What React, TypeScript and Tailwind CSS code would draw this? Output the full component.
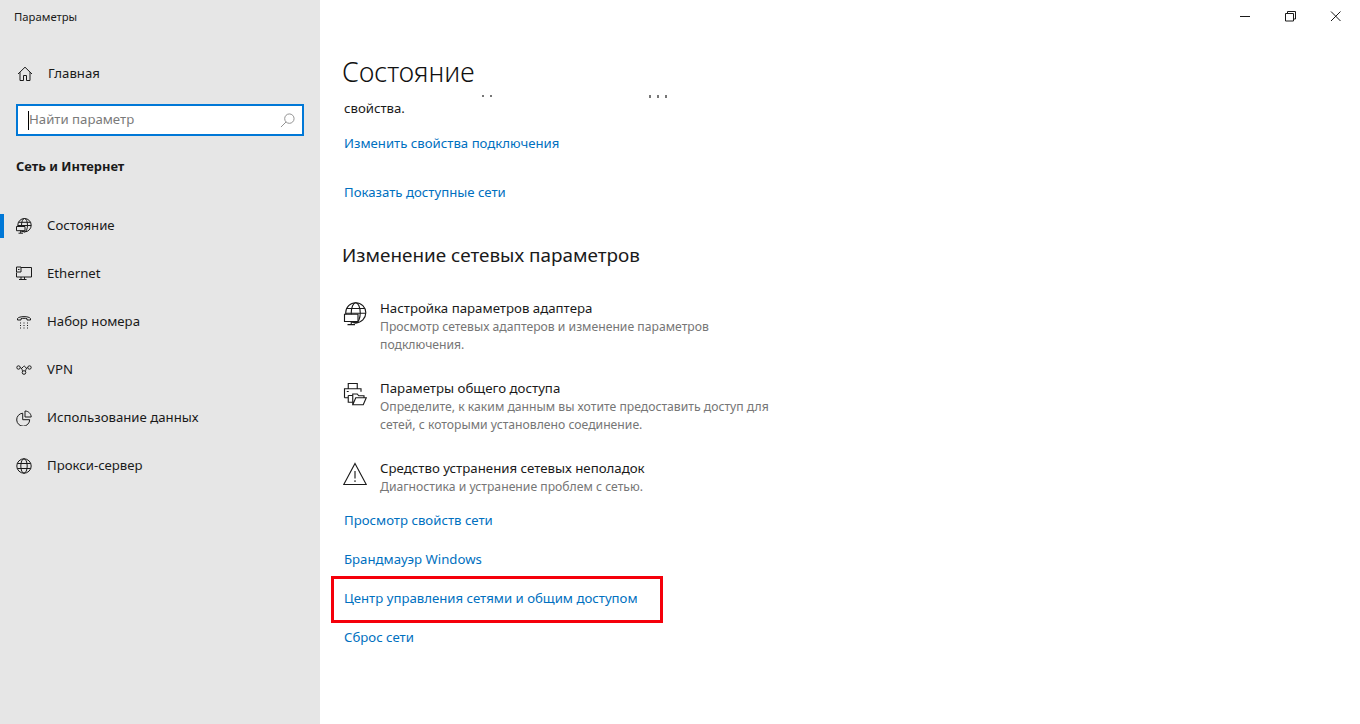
import React from "react";

const font = "font-['Noto_Sans','Open_Sans',sans-serif]";

function Icon({ children, size = 16 }: { children: React.ReactNode; size?: number }) {
  return (
    <svg
      width={size}
      height={size}
      viewBox="0 0 16 16"
      fill="none"
      stroke="#1a1a1a"
      strokeWidth={size > 16 ? 0.75 : 1}
      className="shrink-0"
    >
      {children}
    </svg>
  );
}

const HomeIcon = () => (
  <Icon>
    <path d="M1 8 8 1.200 15 8M3 6.200V14.500H6.500V9.500H9.500V14.500H13V6.200" />
  </Icon>
);

const StatusIcon = () => (
  <Icon>
    <circle cx="8.500" cy="7.200" r="6.700" />
    <ellipse cx="8.500" cy="7.200" rx="3" ry="6.700" />
    <path d="M2.400 4.300H14.600M1.800 7.500H15.200" />
    <path d="M.5 8.500H9V12.700H.5ZM4.700 12.700V15M2.500 15.200H7" fill="#e6e6e6" />
  </Icon>
);

const EthernetIcon = () => (
  <Icon>
    <path d="M5 1.500H15.500V11H.5V6.500M5 11V13.500M8.500 11V13.500M3 13.500H10.500" />
    <path d="M.5 1H5V6H.5ZM2 3.500H3.500" />
  </Icon>
);

const DialIcon = () => (
  <Icon>
    <path d="M1.500 6V4.500C3 2 13 2 14.500 4.500V6H11V4.700C9.500 4.200 6.500 4.200 5 4.700V6Z" />
    <path d="M4 9H5M7.500 9H8.500M11 9H12M4 11.500H5M7.500 11.500H8.500M11 11.500H12M4 14H5M7.500 14H8.500M11 14H12" />
  </Icon>
);

const VpnIcon = () => (
  <Icon>
    <circle cx="2.500" cy="5.500" r="1.700" />
    <circle cx="13.500" cy="5.500" r="1.700" />
    <circle cx="8" cy="10.500" r="1.800" />
    <path d="M4.200 5.500C6 5.500 6.500 9 6.500 9.500M11.800 5.500C10 5.500 9.500 9 9.500 9.500M5.500 6.500 7.500 4.500C8 4 8.500 4 9 4.500L10.500 6.500" />
  </Icon>
);

const DataIcon = () => (
  <Icon>
    <path d="M6.500 3A6.500 6.500 0 1 0 13.500 9.500H6.500Z" transform="translate(.2 .2)" />
    <path d="M9 1C12.300 1 15.200 3.700 15.200 7H9Z" />
  </Icon>
);

const GlobeIcon = () => (
  <Icon>
    <circle cx="8" cy="8" r="7.200" />
    <ellipse cx="8" cy="8" rx="3.200" ry="7.200" />
    <path d="M1.300 5.500H14.700M1.300 10.500H14.700" />
  </Icon>
);

const AdapterIcon = () => (
  <Icon size={24}>
    <circle cx="8.500" cy="7.200" r="6.700" />
    <ellipse cx="8.500" cy="7.200" rx="3" ry="6.700" />
    <path d="M2.400 4.300H14.600M1.800 7.500H15.200" />
    <path d="M1 8.200H10V13H1ZM5.500 13V15M3 15.100H8" fill="#fff" />
  </Icon>
);

const ShareIcon = () => (
  <Icon size={24}>
    <path d="M3.500 4.500V1H9.500V4.500M1 10.500V4.500H12V6.500M1 10.500H3.500M3.500 9V13.500H7M2.500 6.300H3.800M3.500 9H7" />
    <path d="M6.500 15.200V8H9.500L10.500 9.200H14V10.500M6.500 15.200 8.500 10.500H15.500L13.500 15.200Z" fill="#fff" />
  </Icon>
);

const WarnIcon = () => (
  <Icon size={24}>
    <path d="M8 1 15.500 15H.5Z" />
    <path d="M8 6V11M8 12.200V13.400" />
  </Icon>
);

const navItems = [
  { label: "Состояние", icon: <StatusIcon />, active: true },
  { label: "Ethernet", icon: <EthernetIcon /> },
  { label: "Набор номера", icon: <DialIcon /> },
  { label: "VPN", icon: <VpnIcon /> },
  { label: "Использование данных", icon: <DataIcon /> },
  { label: "Прокси-сервер", icon: <GlobeIcon /> },
];

const settings = [
  {
    icon: <AdapterIcon />,
    title: "Настройка параметров адаптера",
    desc: ["Просмотр сетевых адаптеров и изменение параметров", "подключения."],
    height: "h-[80px]",
  },
  {
    icon: <ShareIcon />,
    title: "Параметры общего доступа",
    desc: ["Определите, к каким данным вы хотите предоставить доступ для", "сетей, с которыми установлено соединение."],
    height: "h-[80px]",
  },
  {
    icon: <WarnIcon />,
    title: "Средство устранения сетевых неполадок",
    desc: ["Диагностика и устранение проблем с сетью."],
    height: "h-[51px]",
  },
];

function Sidebar() {
  return (
    <div className="w-[320px] shrink-0 bg-[#e6e6e6] text-[13.2px] text-[#1a1a1a]">
      <div className="h-[50px] pl-[14px] pt-[8px] text-[11.3px] leading-[18px]">Параметры</div>
      <div className="flex h-[48px] items-center pl-[17px]">
        <HomeIcon />
        <span className="ml-[15px]">Главная</span>
      </div>
      <div className="mx-[16px] mt-[6px] flex h-[32px] items-center border-2 border-[#0078d7] bg-white pl-[10px] pr-[7px]">
        <span className="h-[19px] w-px bg-black" />
        <span className="flex-1 text-[#7a7a7a]">Найти параметр</span>
        <svg width="15" height="15" viewBox="0 0 16 16" fill="none" stroke="#8c8c8c">
          <circle cx="10" cy="6" r="5" />
          <path d="M6.400 9.600 1 15" />
        </svg>
      </div>
      <div className="mt-[19px] pl-[16px] text-[12.9px] font-bold leading-[22px]">Сеть и Интернет</div>
      <div className="mt-[25px]">
        {navItems.map((item) => (
          <div key={item.label} className="flex h-[48px] items-center pl-[16px]">
            {item.active && <div className="-ml-[16px] mr-[12px] h-[24px] w-[4px] bg-[#0078d7]" />}
            {item.icon}
            <span className="ml-[15px]">{item.label}</span>
          </div>
        ))}
      </div>
    </div>
  );
}

function LinkRow({ children }: { children: string }) {
  return <div className="h-[39px] text-[13.2px] leading-[20px] text-[#0070c0]">{children}</div>;
}

export default function App() {
  return (
    <div className={`flex h-[724px] w-[1360px] overflow-hidden bg-white ${font}`}>
      <Sidebar />
      <div className="flex-1">
        <div className="flex h-[34px] justify-end">
          <svg width="142" height="34" viewBox="-2 0 142 34" fill="none" stroke="#1a1a1a">
            <path d="M20 16.500H30" />
            <path d="M65.500 13.500H73.500V21H65.500ZM67.500 13.500V11.500H75.500V19H73.500" />
            <path d="M111 11.500 120.500 21M120.500 11.500 111 21" />
          </svg>
        </div>
        <div className="pl-[23px]">
          <div className="-ml-px h-[61px] pt-[19px] text-[26.6px] font-light leading-[38px] text-[#111]">Состояние</div>
          <div className="ml-[139px] flex h-[3px] gap-[6px]">
            <span className="h-[2px] w-[2px] bg-[#777]" />
            <span className="h-[2px] w-[2px] bg-[#777]" />
            <span className="ml-[151px] h-[3px] w-[2px] bg-[#777]" />
            <span className="h-[3px] w-[2px] bg-[#777]" />
            <span className="h-[3px] w-[2px] bg-[#777]" />
          </div>
          <div className="ml-px h-[35px] text-[13.2px] leading-[20px] text-[#1a1a1a]">свойства.</div>
          <div className="ml-px h-[49px] text-[13.2px] leading-[20px] text-[#0070c0]">Изменить свойства подключения</div>
          <div className="ml-px h-[39px] text-[13.2px] leading-[20px] text-[#0070c0]">Показать доступные сети</div>
          <div className="-ml-px mt-[18px] h-[53px] pt-[2px] text-[18.9px] leading-[28px] text-[#1a1a1a]">Изменение сетевых параметров</div>
          <div className="pt-[7px]">
            {settings.map((s) => (
              <div key={s.title} className={`flex ${s.height}`}>
                <div className="mt-[3px] w-[37px] shrink-0">{s.icon}</div>
                <div className="text-[13.25px] leading-[18px]">
                  <div className="mb-px text-[#1a1a1a]">{s.title}</div>
                  {s.desc.map((d) => (
                    <div key={d} className="text-[12.2px] text-[#767676]">{d}</div>
                  ))}
                </div>
              </div>
            ))}
          </div>
          <div className="ml-px">
            <LinkRow>Просмотр свойств сети</LinkRow>
            <LinkRow>Брандмауэр Windows</LinkRow>
            <div className="-ml-[13px] -mt-[12px] mb-[4px] h-[47px] w-[332px] border-[3px] border-[#f5000a] pl-[10px] pt-[9px] text-[13.2px] leading-[20px] text-[#0070c0]">
              Центр управления сетями и общим доступом
            </div>
            <LinkRow>Сброс сети</LinkRow>
          </div>
        </div>
      </div>
    </div>
  );
}
